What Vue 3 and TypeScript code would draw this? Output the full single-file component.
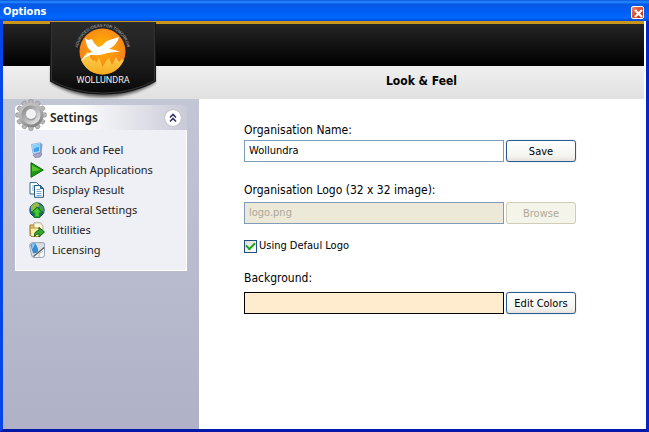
<script setup lang="ts">
import { ref } from 'vue'

type IconName = 'monitor' | 'play' | 'pages' | 'globe' | 'export' | 'license'
interface NavItem {
  label: string
  icon: IconName
}

const items: NavItem[] = [
  { label: 'Look and Feel', icon: 'monitor' },
  { label: 'Search Applications', icon: 'play' },
  { label: 'Display Result', icon: 'pages' },
  { label: 'General Settings', icon: 'globe' },
  { label: 'Utilities', icon: 'export' },
  { label: 'Licensing', icon: 'license' },
]

const organisation = ref('Wollundra')
const logoFile = ref('logo.png')
const useDefaultLogo = ref(true)
const expanded = ref(true)
const teeth: number[] = Array.from({ length: 12 }, (_, i) => i * 30)
</script>

<template>
  <div class="window">
    <header class="titlebar">
      <span class="title">Options</span>
      <button class="close" type="button" aria-label="Close">
        <svg viewBox="0 0 13 13" width="13" height="13">
          <path d="M3 3l7 7M10 3l-7 7" stroke="#fff" stroke-width="2.2" />
        </svg>
      </button>
    </header>

    <div class="client">
      <div class="banner">
        <div class="black-band"></div>
        <div class="heading-band">
          <h1>Look &amp; Feel</h1>
        </div>
        <svg class="badge" viewBox="0 0 116 80" width="116" height="80" role="img" aria-label="Wollundra">
          <defs>
            <linearGradient id="badge-fill" x1="0" y1="0" x2="0" y2="1">
              <stop offset="0" stop-color="#2b2b2b" />
              <stop offset="0.6" stop-color="#1b1b1b" />
              <stop offset="1" stop-color="#090909" />
            </linearGradient>
            <radialGradient id="sun" cx="0.5" cy="0.4" r="0.6">
              <stop offset="0" stop-color="#ffb405" />
              <stop offset="0.5" stop-color="#fb960f" />
              <stop offset="1" stop-color="#f47b20" />
            </radialGradient>
            <linearGradient id="flame" x1="0" y1="0" x2="0" y2="1">
              <stop offset="0" stop-color="#ffd657" />
              <stop offset="1" stop-color="#f5a81c" />
            </linearGradient>
            <clipPath id="sun-clip"><circle cx="57.500" cy="29.500" r="23" /></clipPath>
            <filter id="soft" x="-10%" y="-10%" width="120%" height="130%">
              <feGaussianBlur stdDeviation="1.600" />
            </filter>
            <path id="motto-arc" d="M32.600 32A25 25 0 1 1 82.400 32" />
          </defs>
          <path d="M6 44V61Q29 75 58 75Q87 75 110 61V44Z" fill="#000" opacity="0.6" filter="url(#soft)" />
          <path d="M5 0H111V59.500Q88 72.500 58 72.500Q28 72.500 5 59.500Z" fill="#151515" />
          <path d="M6.500 0H109.500V58.500Q87 71 58 71Q29 71 6.500 58.500Z" fill="url(#badge-fill)" stroke="#343434" />
          <circle cx="57.500" cy="29.500" r="23" fill="url(#sun)" />
          <g clip-path="url(#sun-clip)">
            <path d="M32 44L37 37L43 29L45 35L48 39L50 38L51 41L54 36L55 38L57.500 45L61 39L64 36L67 43L71 35L74 40L77 37L83 42V55H32Z" fill="url(#flame)" />
          </g>
          <path d="M37 39C38 34 43 31 47 30C46 28 43 27 42 24L40 16L43 18L47 17L49 21L53 25C57 25 59 21 62 19C66 17 71 16 74 15C73 19 70 24 64 27L70 28L75 30L70 30L62 31C55 34 49 33 46 33C42 34 39 36 37 39Z" fill="#fff" />
          <text class="motto"><textPath href="#motto-arc" startOffset="50%" text-anchor="middle">ADVANCED IDEAS FOR TOMORROW</textPath></text>
          <text class="brand" x="58" y="61" text-anchor="middle">WOLLUNDRA</text>
        </svg>
      </div>

      <div class="body">
        <aside class="sidebar">
          <section class="panel">
            <div class="panel-head">
              <svg class="gear" viewBox="0 0 32 32" width="32" height="32" aria-hidden="true">
                <defs>
                  <linearGradient id="gear-fill" x1="0" y1="0" x2="0.5" y2="1">
                    <stop offset="0" stop-color="#c8c8c8" />
                    <stop offset="0.5" stop-color="#b6b6b6" />
                    <stop offset="1" stop-color="#858585" />
                  </linearGradient>
                  <linearGradient id="gear-ring" x1="0" y1="0" x2="1" y2="1">
                    <stop offset="0" stop-color="#8a8a8a" />
                    <stop offset="1" stop-color="#e6e6e6" />
                  </linearGradient>
                </defs>
                <path v-for="angle in teeth" :key="angle" d="M13.500 6L14 1Q16 0 18 1L18.500 6Z" fill="#b8b8b8" stroke="#8c8c8c" stroke-width="0.600" :transform="`rotate(${angle} 16 16)`" />
                <circle cx="16" cy="16" r="12.300" fill="url(#gear-fill)" />
                <circle cx="16" cy="16" r="7.500" fill="none" stroke="url(#gear-ring)" stroke-width="4" />
                <circle cx="16" cy="15" r="5" fill="#f1f2f5" />
              </svg>
              <h2>Settings</h2>
              <button class="collapse" type="button" aria-label="Toggle settings" :aria-expanded="expanded" @click="expanded = !expanded">
                <svg viewBox="0 0 16 16" width="16" height="16">
                  <path d="M5 7.500L8 4.500L11 7.500M5 11.500L8 8.500L11 11.500" fill="none" stroke="#323264" stroke-width="1.600" />
                </svg>
              </button>
            </div>
            <nav v-if="expanded" class="nav">
              <a v-for="item in items" :key="item.label" href="#">
                <svg class="icon" viewBox="0 0 16 16" width="16" height="16" aria-hidden="true">
                  <g v-if="item.icon === 'monitor'">
                    <path d="M4 13L9 11L13 12L11 15L6 15.500Z" fill="#aaa8c8" stroke="#77759d" stroke-width="0.700" />
                    <path d="M11 1L13.500 2L12.500 12L10 12.500Z" fill="#9691bd" />
                    <path d="M2.500 2.500L11.500 .800L11 10.500L4 11.500Z" fill="#d5f0ff" stroke="#6f9ed4" stroke-width="0.700" />
                    <path d="M3.700 3.500L10.500 2L10 9.300L4.800 10.300Z" fill="#3ca0f2" />
                    <path d="M3.700 3.500L10.500 2L10.200 5Q6 5 4.400 8Z" fill="#83d5ff" />
                  </g>
                  <g v-else-if="item.icon === 'play'">
                    <path d="M2 .700L14.300 8L2 15.300Z" fill="#1c9b13" stroke="#096208" />
                    <path d="M3 3L11.500 8L3 9.500Z" fill="#58c42a" />
                  </g>
                  <g v-else-if="item.icon === 'pages'">
                    <path d="M1 .600H7.500L10 3V12H1Z" fill="#fff" stroke="#376992" />
                    <path d="M3 4H7M3 6H7M3 8H7" stroke="#8aadd3" />
                    <path d="M5.500 3.500H11.500L14.500 6.500V15.300H5.500Z" fill="#f7fcff" stroke="#24577e" />
                    <path d="M11.500 3.500V6.500H14.500" fill="#2788c4" stroke="#24577e" />
                    <path d="M7.500 7.500H11M7.500 9.500H12.500M7.500 11.500H12.500M7.500 13.500H12.500" stroke="#7da9da" />
                  </g>
                  <g v-else-if="item.icon === 'globe'">
                    <circle cx="8" cy="8" r="7.200" fill="#2766a5" stroke="#174270" />
                    <path d="M2 4Q5 0 9 1L11 4L7 6L5 10L2 9Z" fill="#91bd46" />
                    <path d="M10 2L14.500 5L15 10L11 8Z" fill="#4d9f43" />
                    <path d="M8 5L14 11H11V15.500H5V11H2Z" fill="#20a820" stroke="#096d1c" stroke-width="0.800" />
                    <path d="M8 6.500L11.500 10H9.500V14H6.500V10H4.500Z" fill="#4cc93a" />
                  </g>
                  <g v-else-if="item.icon === 'export'">
                    <path d="M1 3H5L7 1.500L11 3V13.500H1Z" fill="#ebc668" stroke="#a37b2c" />
                    <path d="M5 .800H11.500L14 4V8H5Z" fill="#fff8db" stroke="#918d76" stroke-width="0.700" />
                    <path d="M1 6H11V14.500H2Z" fill="#fff1ab" stroke="#b18d3d" />
                    <path d="M5.500 14.500Q5 9 10 8.500V5.500L15.500 10L10 15V11.800Q7 11.500 5.500 14.500Z" fill="#39a52d" stroke="#0a6616" />
                  </g>
                  <g v-else>
                    <path d="M3 .600H14Q15.500 .600 15.500 2V13Q15.500 15.500 13 15.500H5Q3 15.500 2.500 13L.700 4Q.500 1 3 .600Z" fill="#d8dde5" stroke="#8994a3" stroke-width="0.800" />
                    <path d="M1.500 3Q3 1 6 1Q9.500 6 9 9.500Q7.500 12 4 11Z" fill="#388bd0" />
                    <path d="M4 1Q2 3 3 7Q5 6 6 2Z" fill="#85c6ee" />
                    <path d="M5 14L15 6V13L13 15H6Z" fill="#f8f8f8" />
                    <path d="M4.500 14.500L15.300 5.500" stroke="#55585c" stroke-width="1.200" />
                    <path d="M10 15V11.500L14 9.500" fill="none" stroke="#a0a4aa" stroke-width="0.800" />
                  </g>
                </svg>
                <span>{{ item.label }}</span>
              </a>
            </nav>
          </section>
        </aside>

        <main class="content">
          <form @submit.prevent>
            <div class="field">
              <label for="organisation">Organisation Name:</label>
              <div class="row">
                <input id="organisation" v-model="organisation" class="box" type="text" />
                <button class="push" type="submit">Save</button>
              </div>
            </div>
            <div class="field logo-field">
              <label for="logo-file">Organisation Logo (32 x 32 image):</label>
              <div class="row">
                <input id="logo-file" v-model="logoFile" class="box" type="text" :disabled="useDefaultLogo" />
                <button class="push" type="button" :disabled="useDefaultLogo">Browse</button>
              </div>
            </div>
            <label class="check">
              <input v-model="useDefaultLogo" type="checkbox" />
              <span>Using Defaul Logo</span>
            </label>
            <div class="field color-field">
              <label for="background">Background:</label>
              <div class="row">
                <input id="background" class="box swatch" type="text" readonly />
                <button class="push" type="button">Edit Colors</button>
              </div>
            </div>
          </form>
        </main>
      </div>
    </div>
  </div>
</template>

<style>
body {
  margin: 0;
}
</style>

<style scoped>
* {
  box-sizing: border-box;
}
.window {
  display: flex;
  flex-direction: column;
  min-height: 100vh;
  border: solid;
  border-width: 0 3px 3px;
  border-color: #003be0 #0028c8 #0019a8 #0646e8;
  background: #fff;
  color: #000;
  font-family: "DejaVu Sans Condensed", "DejaVu Sans", sans-serif;
  font-stretch: condensed;
  font-size: 12px;
}
.titlebar {
  display: flex;
  align-items: center;
  justify-content: space-between;
  height: 21px;
  margin: 0 -3px;
  padding: 3px 5px 0 3px;
  background: linear-gradient(#0855dd 0, #298cff 2px, #075ae4 4px, #005cf0 10px, #0068ff 18px, #0045d4 21px);
}
.title {
  color: #fff;
  font-size: 11px;
  font-weight: bold;
  line-height: 18px;
}
.close {
  display: grid;
  place-items: center;
  width: 13px;
  height: 13px;
  padding: 0;
  border: 1px solid #fff;
  border-radius: 2px;
  background: linear-gradient(135deg, #ec8670, #d9401d 60%, #bd310e);
}
.client {
  display: flex;
  flex: 1;
  flex-direction: column;
}
.banner {
  position: relative;
  margin-right: 2px;
}
.black-band {
  height: 45px;
  border-top: 3px solid #c8961a;
  background: linear-gradient(#252525, #000);
}
.heading-band {
  height: 33px;
  padding-left: 196px;
  background: linear-gradient(#f0f0f0, #e0e0e0);
}
h1 {
  margin: 0;
  font-size: 12px;
  line-height: 30px;
  text-align: center;
}
.badge {
  position: absolute;
  top: 1px;
  left: 42px;
}
.motto {
  fill: #bbb;
  font: 4px "Liberation Sans", sans-serif;
}
.brand {
  fill: #eee;
  font: 9px Roboto, sans-serif;
}
.body {
  display: flex;
  flex: 1;
}
.sidebar {
  flex: none;
  width: 196px;
  padding: 6px 12px;
  background: linear-gradient(#c3c6d5, #afb1c7);
}
.panel-head {
  display: flex;
  align-items: center;
  height: 25px;
  padding-right: 6px;
  border-radius: 4px 4px 0 0;
  background: linear-gradient(90deg, #fff 35%, #c9cad7);
}
.gear {
  flex: none;
  margin: -6px 3px 0 0;
}
h2 {
  flex: 1;
  margin: 0;
  color: #222;
  font: 600 12px/24px "Noto Sans", sans-serif;
}
.collapse {
  display: grid;
  place-items: center;
  width: 16px;
  height: 16px;
  padding: 0;
  border: 0;
  border-radius: 50%;
  background: #fff;
  box-shadow: 0 0 1px #888;
}
.nav {
  display: flex;
  flex-direction: column;
  padding: 10px 13px;
  border: 1px solid #fff;
  border-top: 0;
  background: #eff0f5;
}
.nav a {
  display: flex;
  align-items: center;
  gap: 7px;
  height: 20px;
  color: #222;
  font: 11px/20px "Noto Sans", sans-serif;
  text-decoration: none;
  white-space: nowrap;
}
.icon {
  flex: none;
}
.content {
  flex: 1;
  min-width: 0;
  padding: 23px 70px 24px 45px;
}
.field label {
  display: block;
  line-height: 16px;
}
.row {
  display: flex;
  align-items: center;
  gap: 2px;
  margin-top: 2px;
}
.box {
  flex: 1;
  min-width: 0;
  height: 22px;
  padding: 0 4px 2px;
  border: 1px solid #7f9db9;
  border-radius: 0;
  background: #fff;
  color: #000;
  font: inherit;
  font-size: 11px;
}
.box:disabled {
  background: #ece9d8;
  color: #aca899;
}
.swatch {
  border-color: #000;
  background: #ffebcd;
}
.push {
  flex: none;
  width: 70px;
  height: 22px;
  padding: 0;
  border: 1px solid #2b5c91;
  border-radius: 3px;
  background: linear-gradient(#fff, #f4f4f0 75%, #e5e3da);
  box-shadow: 0 0 1px #6589ac;
  color: #000;
  font: inherit;
  font-size: 11px;
}
.push:disabled {
  border-color: #cfccba;
  background: #f5f4ea;
  box-shadow: none;
  color: #aca899;
}
.logo-field {
  margin-top: 20px;
}
.logo-field .row {
  margin-top: 4px;
}
.color-field .row {
  margin-top: 6px;
}
.check {
  display: flex;
  align-items: center;
  gap: 2px;
  width: fit-content;
  margin: 14px 0 16px;
  font-size: 11px;
  line-height: 16px;
}
.check input {
  display: grid;
  place-items: center;
  width: 13px;
  height: 13px;
  margin: 0;
  border: 1px solid #1c5180;
  background: linear-gradient(135deg, #dcdcd7, #fff);
  appearance: none;
}
.check input:checked::before {
  width: 7px;
  height: 4px;
  margin-top: -2px;
  border: solid #21a121;
  border-width: 0 0 2px 2px;
  content: "";
  transform: rotate(-45deg);
}
</style>
